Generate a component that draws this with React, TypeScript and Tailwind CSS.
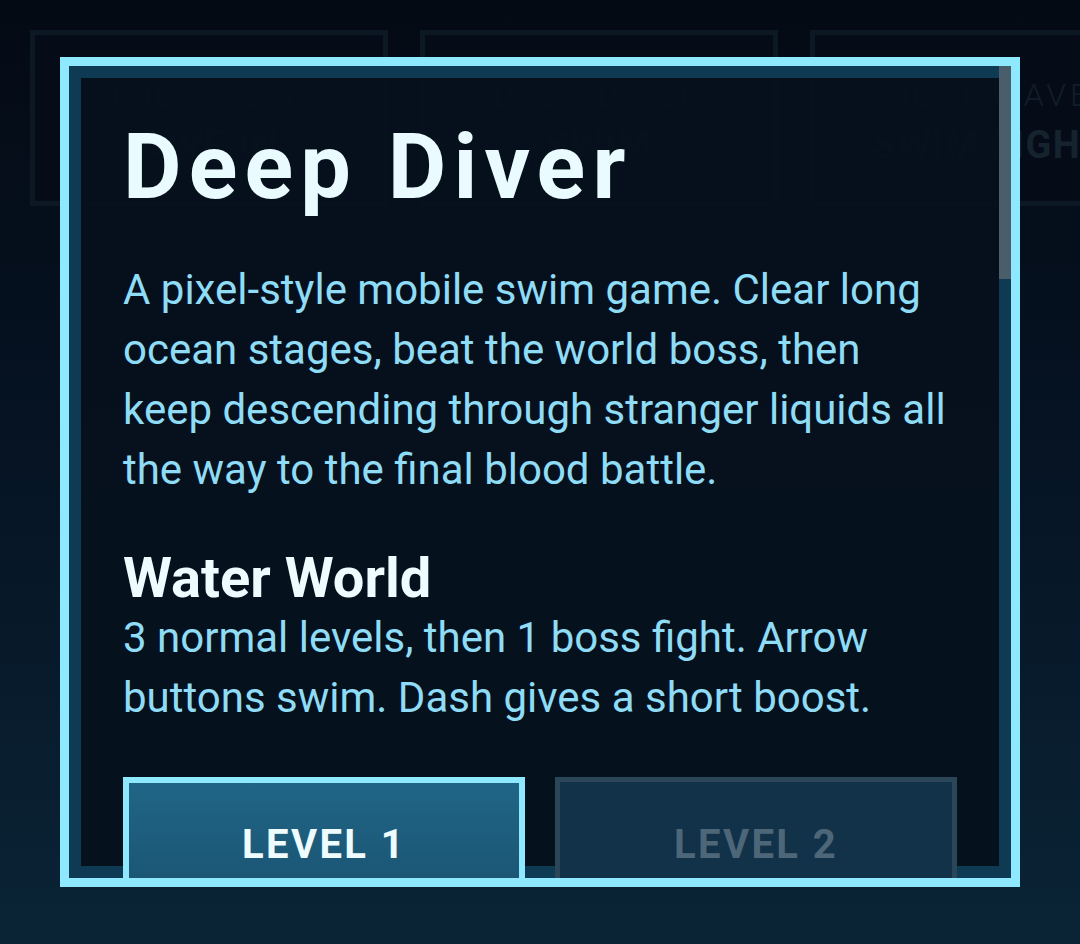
import React from "react";

const cards = [
  { top: "THE OCEAN", bottom: "DIVE IN" },
  { top: "DEEP DIVER", bottom: "SWIM" },
  { top: "NEXT WAVE", bottom: "SWIM FIGHT" },
];

export default function App() {
  return (
    <div
      className="relative h-[944px] w-[1080px] overflow-hidden bg-gradient-to-b from-[#040a14] via-[#061424] to-[#0a2436]"
      style={{ fontFamily: "Roboto, 'Noto Sans', sans-serif" }}
    >
      <div className="flex gap-[32px] pl-[30px] pt-[30px]">
        {cards.map((c) => (
          <div
            key={c.top}
            className="flex h-[176px] w-[358px] shrink-0 flex-col items-center overflow-hidden border-[5px] border-[#0c1824] bg-[#050c17] pt-[40px]"
          >
            <div className="whitespace-nowrap text-[32px] font-light leading-[40px] tracking-[0.12em] text-[#111e2a]">
              {c.top}
            </div>
            <div className="mt-[8px] whitespace-nowrap text-[38px] font-bold leading-[44px] tracking-[0.04em] text-[#15232e]">
              {c.bottom}
            </div>
          </div>
        ))}
      </div>

      <div className="absolute left-[60px] top-[57px] flex h-[830px] w-[960px] overflow-hidden border-[9px] border-[#8ee9ff]">
        <div className="flex-1 bg-[#06111d]/95 pl-[54px] pr-[42px] pt-[57px] shadow-[inset_12px_12px_0_0_#0f3a54,inset_0_-12px_0_0_#0f3a54]">
          <h1 className="text-[90px] font-bold leading-[90px] tracking-[0.08em] text-[#e9fbff]">
            Deep Diver
          </h1>
          <p className="mt-[47px] text-[42px] leading-[60px] text-[#8fdcf6]">
            A pixel-style mobile swim game. Clear long ocean stages, beat the
            world boss, then keep descending through stranger liquids all the
            way to the final blood battle.
          </p>
          <h2 className="mt-[48px] text-[56px] font-bold leading-[60px] text-[#eefbff]">
            Water World
          </h2>
          <p className="text-[42px] leading-[60px] text-[#8fdcf6]">
            3 normal levels, then 1 boss fight. Arrow buttons swim. Dash gives
            a short boost.
          </p>
          <div className="mt-[49px] grid grid-cols-2 gap-[30px]">
            <button className="flex h-[136px] items-center justify-center border-[6px] border-[#8ee9ff] bg-gradient-to-b from-[#206586] to-[#1a5270] text-[40px] font-bold tracking-[0.06em] text-[#eefbff]">
              LEVEL 1
            </button>
            <button className="flex h-[136px] items-center justify-center border-[5px] border-[#2a4658] bg-[#12324a] text-[40px] font-bold tracking-[0.06em] text-[#4e6778]">
              LEVEL 2
            </button>
          </div>
        </div>
        <div className="flex w-[12px] flex-col bg-[#0f3a54]">
          <div className="h-[213px] bg-[#4a5d6b]" />
        </div>
      </div>
    </div>
  );
}
